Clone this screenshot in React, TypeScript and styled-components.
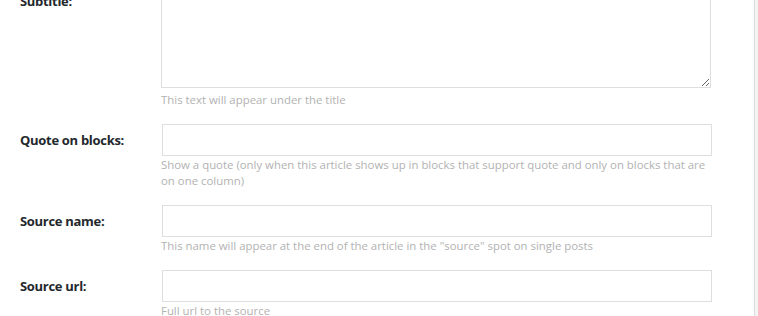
import React from 'react';
import styled, { createGlobalStyle } from 'styled-components';

const GlobalStyle = createGlobalStyle`
  html, body {
    margin: 0;
    padding: 0;
    background: #fff;
    overflow: hidden;
  }
  body {
    font-family: "Open Sans", "Noto Sans", sans-serif;
  }
`;

type Field = {
  label: string;
  hint: string;
  multiline?: boolean;
};

const fields: Field[] = [
  { label: 'Subtitle:', hint: 'This text will appear under the title', multiline: true },
  {
    label: 'Quote on blocks:',
    hint: 'Show a quote (only when this article shows up in blocks that support quote and only on blocks that are on one column)',
  },
  {
    label: 'Source name:',
    hint: 'This name will appear at the end of the article in the "source" spot on single posts',
  },
  { label: 'Source url:', hint: 'Full url to the source' },
];

const App = () => {
  return (
    <>
      <GlobalStyle />
      <Page>
        <Form>
          {fields.map((f) => (
            <Row key={f.label} $first={!!f.multiline}>
              <Label>{f.label}</Label>
              <FieldCell>
                {f.multiline ? <TextArea /> : <Input type="text" />}
                <Hint>{f.hint}</Hint>
              </FieldCell>
            </Row>
          ))}
        </Form>
        <Edge />
      </Page>
    </>
  );
};

const Page = styled.div`
  display: flex;
  width: 758px;
  height: 316px;
  overflow: hidden;
`;

const Form = styled.div`
  flex: 1;
  display: flex;
  flex-direction: column;
  gap: 16px;
  padding-left: 20px;
`;

const Row = styled.div<{ $first: boolean }>`
  display: grid;
  grid-template-columns: 141px 550px;
  align-items: start;
  margin-top: ${(p) => (p.$first ? '-15px' : '0')};
`;

const Label = styled.div`
  font-size: 13px;
  font-weight: 700;
  color: #23282d;
  line-height: 32px;
  letter-spacing: -0.3px;
`;

const FieldCell = styled.div`
  display: flex;
  flex-direction: column;
`;

const Input = styled.input`
  box-sizing: border-box;
  width: 550px;
  height: 32px;
  margin: 0 0 0 1px;
  border: 1px solid #dedede;
  border-radius: 0;
  background: #fff;
  outline: none;
`;

const TextArea = styled.textarea`
  box-sizing: border-box;
  display: block;
  width: 550px;
  height: 103px;
  margin: 0 0 3px;
  border: 1px solid #dedede;
  border-radius: 0;
  background: #fff;
  resize: vertical;
  outline: none;
`;

const Hint = styled.div`
  margin-top: 1px;
  font-size: 11.4px;
  line-height: 16px;
  color: #b2b2b2;
`;

const Edge = styled.div`
  width: 3px;
  border-left: 1px solid #dcdcdc;
  background: #f3f3f3;
`;

export default App;
